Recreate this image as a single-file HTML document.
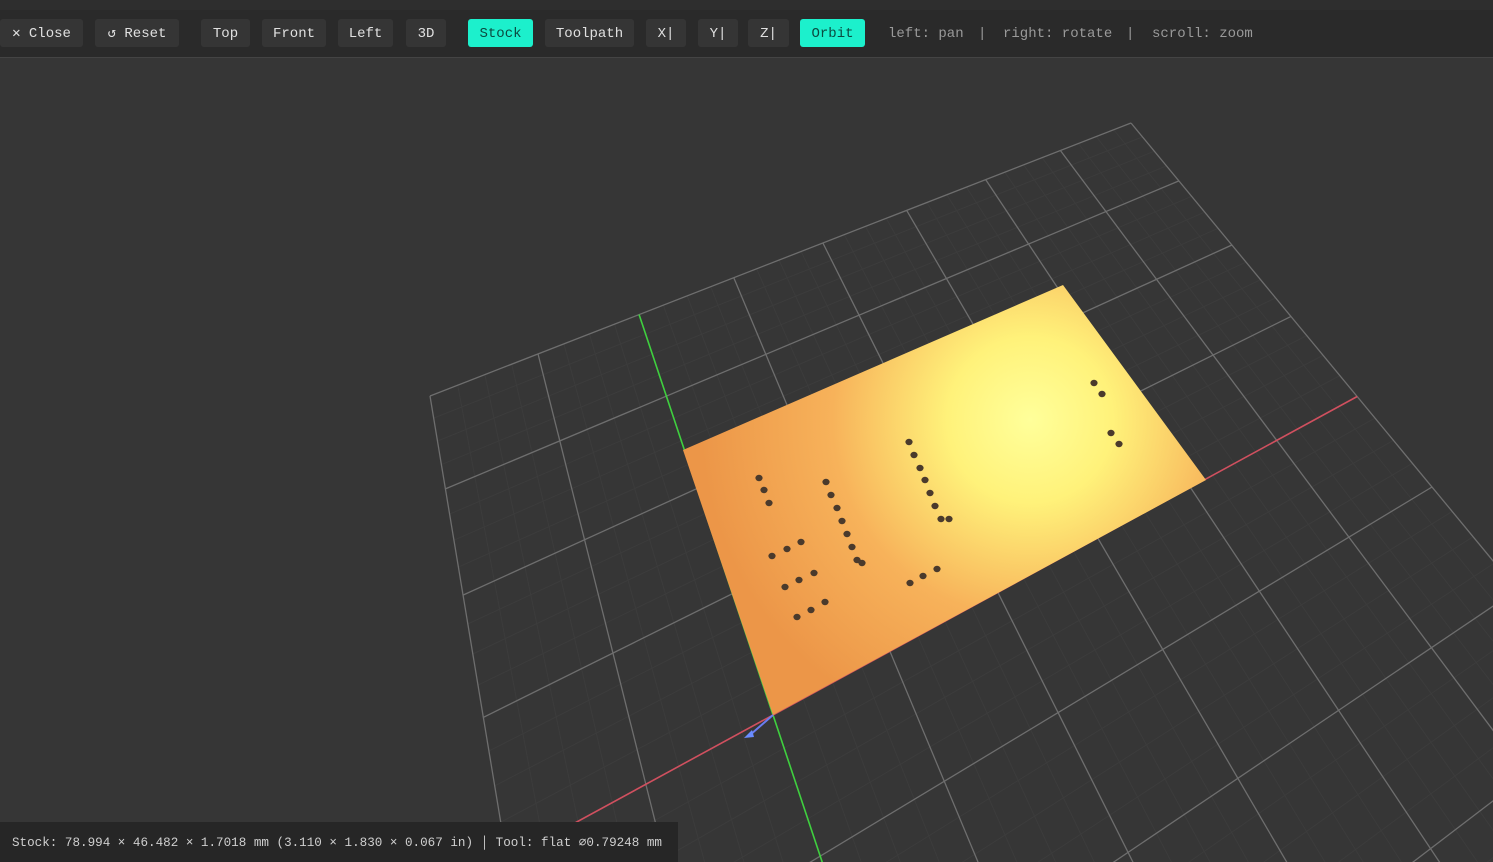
<!DOCTYPE html>
<html><head><meta charset="utf-8"><style>
html,body{margin:0;padding:0;width:1493px;height:862px;overflow:hidden;background:#363636;font-family:"Liberation Mono",monospace}
#top{position:absolute;left:0;top:0;width:1493px;height:10px;background:#2e2e2e}
#bar{position:absolute;left:0;top:10px;width:1493px;height:47px;background:#2a2a2a;border-bottom:1px solid #444}
.b{position:absolute;top:9px;height:28px;line-height:30px;background:#353535;color:#e0e0e0;font-size:14px;text-align:center;border-radius:3px}
.on{background:#1cf0cc;color:#0b4a40}
.h{position:absolute;top:9px;line-height:30px;color:#9a9a9a;font-size:14px}
#st{position:absolute;left:0;top:822px;width:678px;height:40px;background:#262626;color:#cfcfcf;font-size:12.6px;line-height:43px;padding-left:12px;box-sizing:border-box;white-space:nowrap;overflow:hidden}
svg{position:absolute;left:0;top:0}
</style></head><body>
<svg id="s" width="1493" height="862"></svg>
<div id="top"></div>
<div id="bar">
<div class="b" style="left:0;width:83px">✕ Close</div>
<div class="b" style="left:95px;width:84px">↺ Reset</div>
<div class="b" style="left:201px;width:49px">Top</div>
<div class="b" style="left:262px;width:64px">Front</div>
<div class="b" style="left:338px;width:55px">Left</div>
<div class="b" style="left:406px;width:40px">3D</div>
<div class="b on" style="left:468px;width:65px">Stock</div>
<div class="b" style="left:545px;width:89px">Toolpath</div>
<div class="b" style="left:646px;width:40px">X|</div>
<div class="b" style="left:698px;width:40px">Y|</div>
<div class="b" style="left:748px;width:41px">Z|</div>
<div class="b on" style="left:800px;width:65px">Orbit</div>
<div class="h" style="left:888px">left: pan</div>
<div class="h" style="left:978px">|</div>
<div class="h" style="left:1003px">right: rotate</div>
<div class="h" style="left:1126px">|</div>
<div class="h" style="left:1152px">scroll: zoom</div>
</div>
<div id="st">Stock: 78.994 × 46.482 × 1.7018 mm (3.110 × 1.830 × 0.067 in) │ Tool: flat ⌀0.79248 mm</div>
<script>
function solve(A,b){var n=b.length;for(var i=0;i<n;i++){var m=i;for(var k=i+1;k<n;k++)if(Math.abs(A[k][i])>Math.abs(A[m][i]))m=k;var t=A[i];A[i]=A[m];A[m]=t;t=b[i];b[i]=b[m];b[m]=t;for(var k=i+1;k<n;k++){var f=A[k][i]/A[i][i];for(var j=i;j<n;j++)A[k][j]-=f*A[i][j];b[k]-=f*b[i];}}var x=new Array(n);for(var i=n-1;i>=0;i--){var s=b[i];for(var j=i+1;j<n;j++)s-=A[i][j]*x[j];x[i]=s/A[i][i];}return x;}
var src=[[0,0],[8,0],[0,4],[2,4]],dst=[[430,396],[1131,123],[507,860],[773,715]];
var A=[],b=[];for(var i=0;i<4;i++){var u=src[i][0],v=src[i][1],X=dst[i][0],Y=dst[i][1];A.push([u,v,1,0,0,0,-u*X,-v*X]);b.push(X);A.push([0,0,0,u,v,1,-u*Y,-v*Y]);b.push(Y);}
var h=solve(A,b);
function P(u,v){var w=h[6]*u+h[7]*v+1;return [(h[0]*u+h[1]*v+h[2])/w,(h[3]*u+h[4]*v+h[5])/w];}
var out='';
function line(p,q,c,w){out+='<line x1="'+p[0].toFixed(1)+'" y1="'+p[1].toFixed(1)+'" x2="'+q[0].toFixed(1)+'" y2="'+q[1].toFixed(1)+'" stroke="'+c+'" stroke-width="'+w+'"/>';}
var U0=0,U1=8,V0=0,V1=8;
for(var u=U0;u<U1;u+=0.25){if(Math.abs(u-Math.round(u))<0.01)continue;line(P(u,V0),P(u,V1),'#3c3c3c',1);}
for(var v=V0;v<V1;v+=0.25){if(Math.abs(v-Math.round(v))<0.01)continue;line(P(U0,v),P(U1,v),'#3c3c3c',1);}
for(var u=U0;u<=U1;u++){if(u==2)continue;line(P(u,V0),P(u,V1),'#6e6e6e',1.3);}
for(var v=V0;v<=V1;v++){if(v==4)continue;line(P(U0,v),P(U1,v),'#6e6e6e',1.3);}
line(P(2,V0),P(2,V1),'#3fd03f',1.6);
line(P(U0,4),P(U1,4),'#d0505f',1.6);
out+='<defs><radialGradient id="g" gradientUnits="userSpaceOnUse" cx="1030" cy="420" r="330"><stop offset="0" stop-color="#ffff9a"/><stop offset="0.25" stop-color="#fff27a"/><stop offset="0.6" stop-color="#f7b25a"/><stop offset="1" stop-color="#ec9648"/></radialGradient></defs>';
out+='<polygon points="683,450 1063,285 1206,480 773,715" fill="url(#g)"/>';
var holes=[[759,478],[764,490],[769,503],[826,482],[831,495],[837,508],[842,521],[847,534],[852,547],[857,560],[862,563],[909,442],[914,455],[920,468],[925,480],[930,493],[935,506],[941,519],[949,519],[772,556],[787,549],[801,542],[785,587],[799,580],[814,573],[797,617],[811,610],[825,602],[910,583],[923,576],[937,569],[1094,383],[1102,394],[1111,433],[1119,444]];
holes.forEach(function(p){out+='<ellipse cx="'+p[0]+'" cy="'+p[1]+'" rx="3.6" ry="3.2" fill="#4a3a2c"/>';});
out+='<line x1="773" y1="715" x2="750" y2="735" stroke="#6a7cf0" stroke-width="2"/><polygon points="744,738 752,730 754,737" fill="#6a8cff"/>';
document.getElementById('s').innerHTML=out;
</script>
</body></html>
